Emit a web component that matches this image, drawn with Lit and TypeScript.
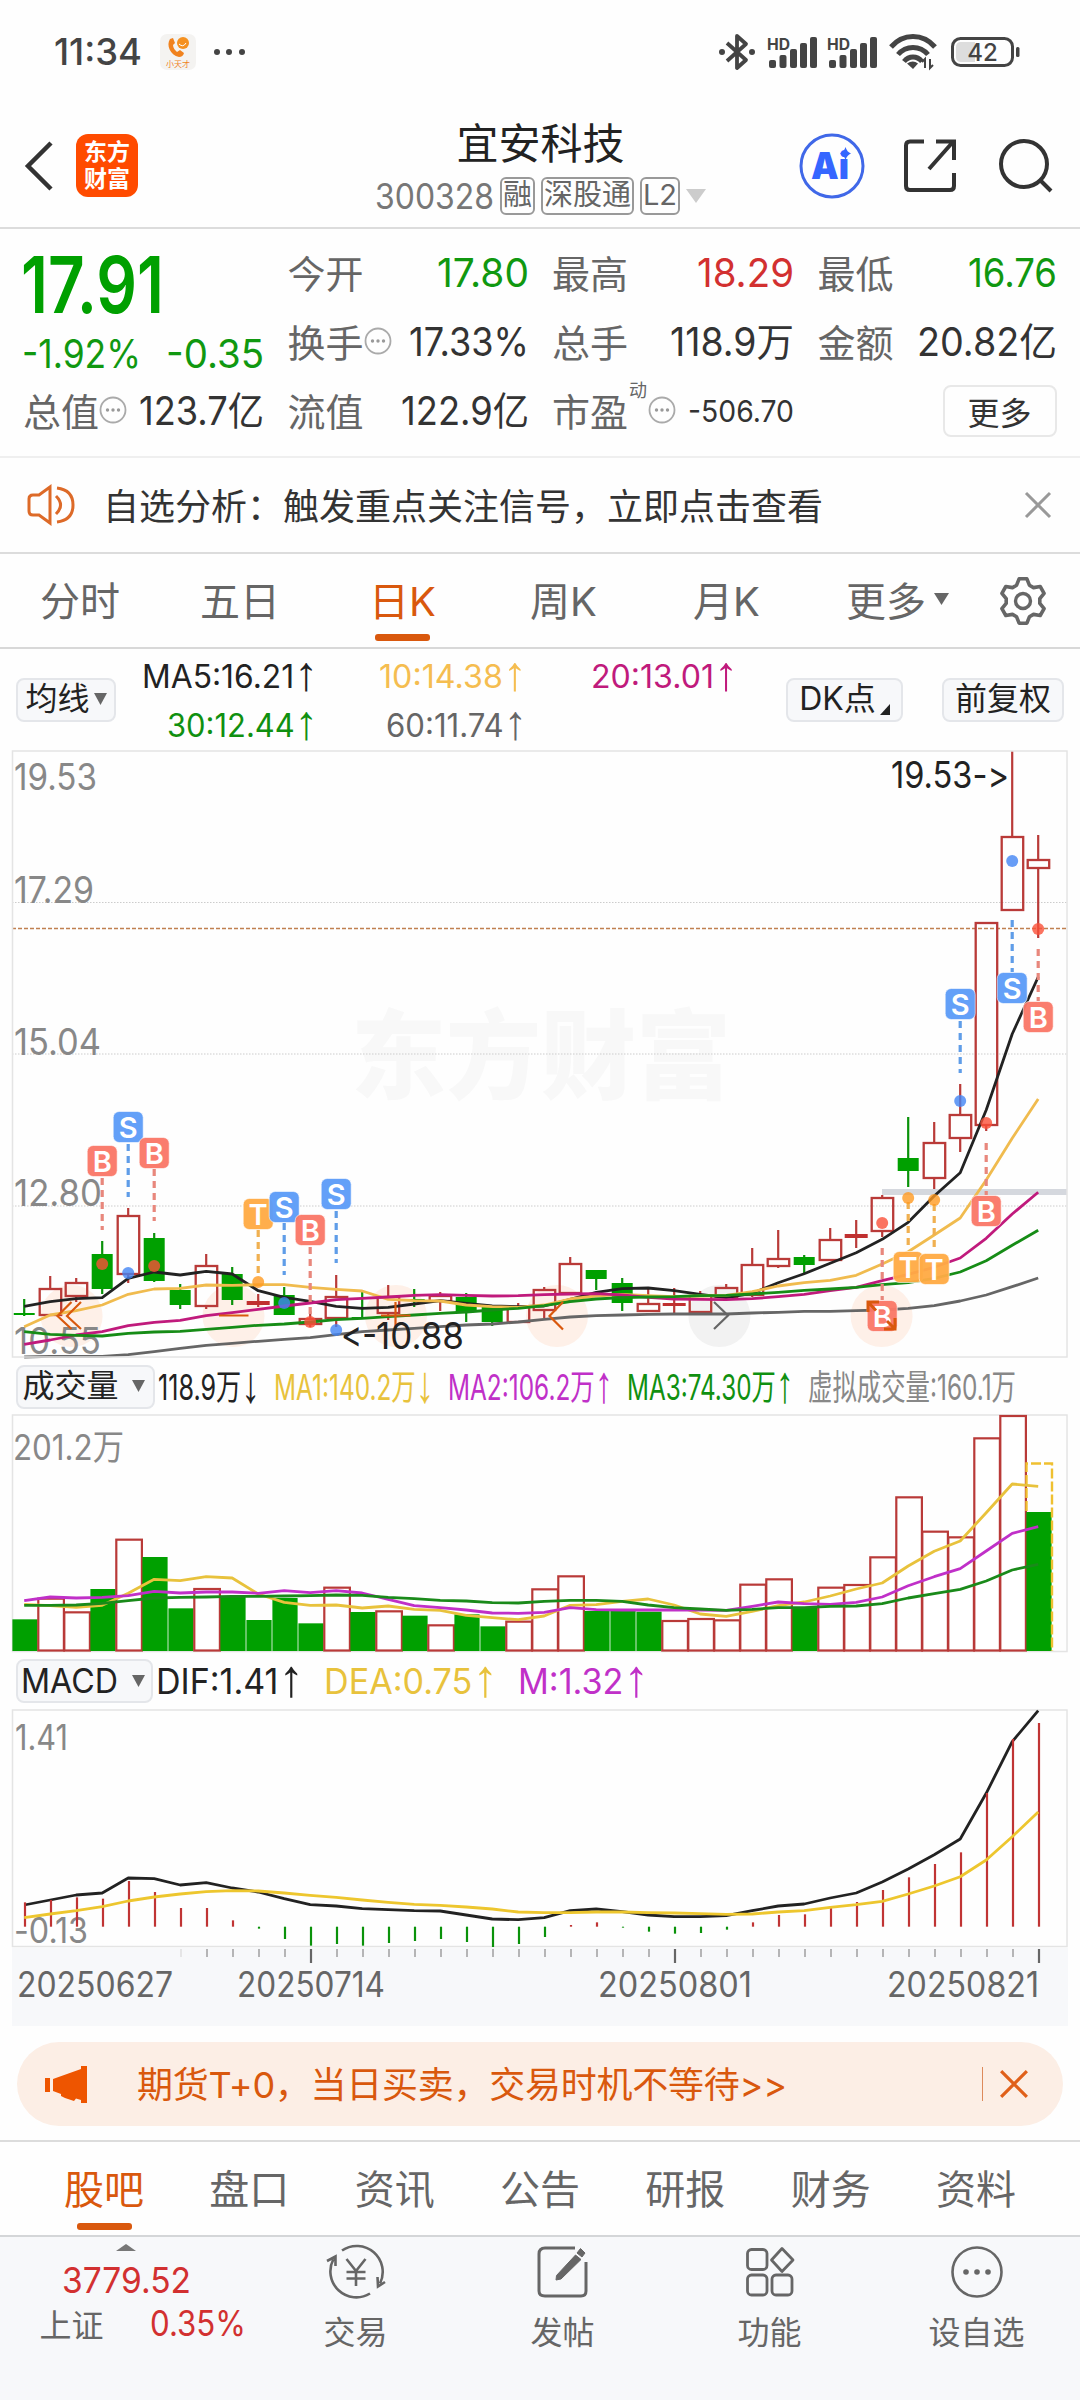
import { LitElement, html, svg, css, nothing } from "lit";
import { customElement } from "lit/decorators.js";

const FONT = `Inter, "Noto Sans CJK SC", sans-serif`;
const ORANGE = "#d9580d";
const GREEN = "#00a000";
const RED = "#b93a38";

/** Arrows use a narrow, tall glyph instead of the wide one of the text face. */
const withArrow = (s: string, size: number) => {
  const last = s.slice(-1);
  return last === "↑" || last === "↓"
    ? svg`${s.slice(0, -1)}<tspan font-family="Liberation Sans, sans-serif" font-size=${size * 1.5} dy=${size * 0.06}>${last}</tspan>`
    : svg`${s}`;
};

/** Text set to an exact advance width, flowing like an inline block; `tall` narrows the face. */
const fit = (s: string, w: number, size: number, color: string, weight = 400, tall = 1) => {
  const h = Math.round(size * 1.2);
  const base = (h / 2 + size * 0.3635) / tall;
  return html`<svg class="fit" width=${w} height=${h} viewBox="0 0 ${w} ${h}">
    <text x="0" y=${base} font-family=${FONT} font-size=${size / tall} font-weight=${weight} transform="scale(1 ${tall})"
      fill=${color} textLength=${w} lengthAdjust="spacingAndGlyphs">${withArrow(s, size / tall)}</text></svg>`;
};

/** Text placed at a point of a chart, set to an exact width. */
const label = (s: string, x: number, y: number, w: number, size: number, color: string, weight = 400) =>
  svg`<text x=${x} y=${y} font-family=${FONT} font-size=${size} font-weight=${weight} fill=${color}
    textLength=${w} lengthAdjust="spacingAndGlyphs">${s}</text>`;

const cx = (i: number) => 24.2 + 26 * i;
const line = (ys: number[], base: number, color: string, width = 2.8) =>
  svg`<polyline fill="none" stroke=${color} stroke-width=${width} stroke-linejoin="round"
    points=${ys.map((y, i) => `${cx(i)},${(base + y / 3).toFixed(1)}`).join(" ")}/>`;

const shared = css`
  :host { display: block; }
  svg { display: block; flex: none; overflow: visible; }
  text { font-variant-ligatures: none; font-feature-settings: "calt" 0, "liga" 0; }
`;

// kind, body top, body bottom, wick top, wick bottom
type Candle = [string, number, number, number, number];
const CANDLES: Candle[] = [
  ["g", 1313, 1315, 1299, 1316], ["r", 1289, 1315, 1276, 1315], ["r", 1283, 1296, 1278, 1302],
  ["g", 1254, 1289, 1241, 1294], ["r", 1216, 1274, 1208, 1283], ["g", 1238, 1281, 1233, 1282],
  ["g", 1290, 1305, 1284, 1309], ["r", 1266, 1306, 1254, 1309], ["g", 1274, 1300, 1267, 1305],
  ["s", 1301, 1305, 1294, 1307], ["g", 1295, 1315, 1287, 1315], ["r", 1319, 1324, 1311, 1327],
  ["r", 1297, 1318, 1275, 1327], ["g", 1317, 1319, 1292, 1318], ["r", 1297, 1313, 1285, 1320],
  ["g", 1299, 1301, 1289, 1307], ["r", 1296, 1301, 1292, 1311], ["g", 1297, 1312, 1293, 1322],
  ["g", 1307, 1322, 1305, 1326], ["r", 1307, 1322, 1303, 1322], ["r", 1290, 1310, 1287, 1318],
  ["r", 1264, 1293, 1257, 1294], ["g", 1270, 1279, 1270, 1290], ["g", 1283, 1303, 1278, 1311],
  ["r", 1304, 1311, 1289, 1311], ["s", 1303, 1306, 1288, 1313], ["r", 1296, 1312, 1291, 1312],
  ["r", 1288, 1297, 1284, 1300], ["r", 1265, 1295, 1248, 1297], ["r", 1259, 1266, 1230, 1268],
  ["g", 1257, 1265, 1255, 1273], ["r", 1240, 1260, 1228, 1260], ["s", 1234, 1238, 1220, 1248],
  ["r", 1198, 1231, 1195, 1237], ["g", 1158, 1171, 1117, 1187], ["r", 1143, 1178, 1122, 1189],
  ["r", 1115, 1138, 1084, 1152], ["r", 923, 1125, 923, 1131], ["r", 837, 910, 751, 910],
  ["r", 860, 868, 835, 938],
];
const MA5 = [739,725,716,713,655,636,645,634,642,692,712,724,739,745,742,732,722,730,738,740,738,718,697,686,684,692,703,713,700,668,641,610,578,538,487,408,338,150,-78,-249];
const MA10 = [800,765,752,735,703,687,685,675,676,674,674,682,688,693,718,722,723,735,740,742,735,717,708,703,707,710,708,706,695,678,668,661,646,612,575,525,474,360,235,117];
const MA20 = [853,840,825,815,797,787,781,767,758,748,738,729,719,715,711,706,704,706,708,707,704,702,701,705,712,717,718,719,716,710,703,692,682,662,643,622,594,535,462,397];
const MA30 = [815,823,826,828,820,816,814,808,802,796,792,786,779,775,770,765,760,756,750,745,737,725,717,713,711,710,707,706,702,697,691,687,682,674,668,655,636,602,556,511];
const MA60 = [891,889,889,889,884,875,865,856,850,844,838,833,824,815,810,805,800,795,792,786,778,771,767,765,763,762,762,762,759,757,754,754,752,750,745,737,723,705,680,654];

// kind, candle index, badge centre, dot centre, leader start, leader end
type Mark = ["B" | "S" | "T", number, number, number, number, number];
const MARKS: Mark[] = [
  ["B", 3, 1161, 1264, 1178, 1230], ["S", 4, 1127, 1273, 1144, 1197], ["B", 5, 1153, 1266, 1169, 1221],
  ["T", 9, 1214, 1282, 1230, 1277], ["S", 10, 1207, 1303, 1223, 1275], ["B", 11, 1230, 1322, 1247, 1318],
  ["S", 12, 1194, 1330, 1211, 1263], ["B", 33, 1316, 1223, 1248, 1300], ["T", 34, 1267, 1198, 1202, 1250],
  ["T", 35, 1269, 1200, 1204, 1252], ["S", 36, 1004, 1101, 1021, 1073], ["B", 37, 1211, 1123, 1143, 1195],
  ["S", 38, 988, 861, 920, 972], ["B", 39, 1017, 929, 949, 1001],
];
const MARK_FILL = { B: "#fa7868", S: "#5d9cf8", T: "#ffab45" };
const MARK_DOT = { B: "#fa5038", S: "#4285f4", T: "#ff9a20" };
const MARK_LINE = { B: "#e8877c", S: "#5f9de8", T: "#f0b050" };

@customElement("kline-chart")
class KlineChart extends LitElement {
  static styles = shared;

  private candle([k, t, b, wt, wb]: Candle, i: number) {
    const x = cx(i);
    const color = k === "g" ? "#0a920a" : RED;
    const wicks = svg`<path d="M${x} ${wt}V${t}M${x} ${b}V${wb}" stroke=${color} stroke-width="2.2"/>`;
    return k === "r"
      ? svg`${wicks}<rect x=${x - 10.5} y=${t} width="21.500" height=${b - t} fill="none" stroke=${color} stroke-width="2.300"/>`
      : svg`${wicks}<rect x=${x - (k === "s" ? 11.5 : 10.5)} y=${t} width=${k === "s" ? 23 : 21} height=${b - t}
          fill=${k === "g" ? GREEN : "#c03030"}/>`;
  }

  private mark([k, i, by, dy, y1, y2]: Mark) {
    const x = cx(i);
    return svg`
      <path d="M${x} ${y1}V${y2}" stroke=${MARK_LINE[k]} stroke-width="3.2" stroke-dasharray="7 5"/>
      <circle cx=${x} cy=${dy} r="6" fill=${MARK_DOT[k]} fill-opacity=".8"/>
      <rect x=${x - 15} y=${by - 15.5} width="30" height="31" rx="6" fill=${MARK_FILL[k]} fill-opacity=".96"
        stroke="#fff" stroke-opacity=".6"/>
      <text x=${x} y=${by + 10.5} text-anchor="middle" font-family=${FONT} font-size="29" font-weight="600" fill="#fff">${k}</text>`;
  }

  render() {
    const halo = (x: number, c = "#fef0e8") => svg`<circle cx=${x} cy="1316" r="31" fill=${c}/>`;
    return html`<svg width="1080" height="608" viewBox="0 750 1080 608">
      ${label("东方财富", 351, 1091, 380, 97, "#f8f8f8", 900)}
      ${[902.5, 1054, 1206].map((y) => svg`<path d="M12 ${y}H1067" stroke="#ccc" stroke-dasharray="1.5 1.5"/>`)}
      ${label("19.53", 14, 790, 83, 37, "#888")}
      ${label("17.29", 14, 903, 80, 37, "#888")}
      ${label("15.04", 14, 1055, 87, 37, "#888")}
      ${label("12.80", 14, 1206, 88, 37, "#888")}
      ${halo(71.6)}${halo(233.5)}${halo(396)}${halo(557)}${halo(719.4, "#f2f2f2")}${halo(881.6)}
      ${label("10.55", 14, 1354, 87, 37, "#888")}
      <rect x="882" y="1189" width="185" height="6" fill="#d5d8de"/>
      <path d="M12 928.5H1067" stroke="#c08050" stroke-width="1.3" stroke-dasharray="4 2"/>
      ${CANDLES.map((c, i) => this.candle(c, i))}
      ${line(MA5, 1060, "#222")}${line(MA10, 1060, "#f0bb4e")}${line(MA20, 1060, "#c01a7c")}
      ${line(MA30, 1060, "#168c16")}${line(MA60, 1060, "#666")}
      <rect x="12.5" y="751" width="1054.5" height="606" fill="none" stroke="#e4e4e4" stroke-width="1.5"/>
      ${MARKS.map((m) => this.mark(m))}
      <g fill="none" stroke=${ORANGE} stroke-width="2.2">
        <path d="M71.500 1302 57.500 1316 71.500 1329M81 1302 67 1316 81 1329"/>
        <path d="M219 1315.500H248.500M381 1315.500H410.500M395.500 1302V1330"/>
        <path d="M563 1302 549.500 1316 563 1329.500"/>
        <path d="M868 1302 876 1310.500M887 1321 895 1329M868 1312V1302H879M895 1318V1329H884" stroke-width="3"/>
      </g>
      <path d="M714 1302 728 1315.500 714 1329" fill="none" stroke="#666" stroke-width="2.200"/>
      ${label("19.53->", 891, 788, 118, 37, "#222")}
      ${label("<-", 341, 1347, 36, 37, "#222")}
      ${label("10.88", 376, 1349, 88, 37, "#222")}
    </svg>`;
  }
}

const VOLUME: [string, number][] = [
  ["g",808],["r",746],["r",787],["g",717],["r",569],["g",621],["g",775],["r",717],["g",738],["g",810],
  ["g",744],["g",820],["r",713],["g",786],["r",784],["g",797],["r",826],["g",793],["g",829],["r",815],
  ["r",718],["r",679],["g",783],["g",783],["g",785],["r",813],["r",807],["r",811],["r",704],["r",688],
  ["g",771],["r",713],["r",705],["r",622],["r",442],["r",545],["r",562],["r",265],["r",198],["g",486],
];
const VMA1 = [763,767,772,766,730,688,692,680,684,732,757,766,765,774,768,778,781,796,803,809,798,766,764,754,747,765,792,799,784,767,756,738,717,699,648,604,573,488,402,409];
const VMA2 = [752,741,744,742,737,724,729,726,726,730,722,728,722,729,748,767,773,780,789,790,787,773,779,780,780,780,780,781,769,756,761,763,757,741,707,680,656,603,550,530];
const VMA3 = [766,766,765,760,752,744,742,741,739,739,738,737,735,736,742,746,751,753,758,759,754,751,751,754,765,773,777,781,778,773,773,769,768,761,744,731,718,693,660,643];

@customElement("volume-chart")
class VolumeChart extends LitElement {
  static styles = shared;
  render() {
    return html`<svg width="1080" height="238" viewBox="0 1414 1080 238">
      <rect x="12.5" y="1415" width="1054.500" height="236.500" fill="none" stroke="#e4e4e4" stroke-width="1.500"/>
      ${label("201.2万", 13, 1460, 111, 35, "#888")}
      ${VOLUME.map(([k, t], i) => {
        const x = cx(i) - 12.4;
        const y = 1350 + t / 3;
        return k === "g"
          ? svg`<rect x=${x + 0.6} y=${y} width="25.200" height=${1651 - y} fill=${GREEN}/>`
          : svg`<rect x=${x + 0.5} y=${y} width="25.600" height=${1650.5 - y} fill="#fff" stroke=${RED} stroke-width="2.200"/>`;
      })}
      <path d="M1026.500 1511V1463.500H1052V1651" fill="none" stroke="#efc030" stroke-width="2.400" stroke-dasharray="10 3"/>
      ${line(VMA1, 1350, "#e8c23c")}${line(VMA2, 1350, "#c030c8")}${line(VMA3, 1350, "#1a8a1a")}
    </svg>`;
  }
}

const HIST = [727,720,712,716,663,696,744,744,781,806,837,857,852,857,849,843,837,846,861,852,831,795,787,803,815,821,819,809,787,765,763,742,726,690,652,612,577,399,237,189];
const DIF = [735,720,705,699,654,656,675,668,684,696,716,734,738,746,749,752,753,765,777,779,773,752,747,755,765,770,770,767,752,738,732,714,699,666,627,584,537,400,245,152];
const DEA = [773,762,752,740,723,711,702,695,692,693,699,706,712,720,727,733,736,741,747,756,758,758,756,756,758,759,761,763,762,756,752,742,734,724,702,678,650,600,530,456];

@customElement("macd-chart")
class MacdChart extends LitElement {
  static styles = shared;
  render() {
    return html`<svg width="1080" height="317" viewBox="0 1709 1080 317">
      <rect x="12" y="1948" width="1056" height="78" fill="#f7f8fa"/>
      <rect x="12.5" y="1710" width="1054.500" height="236.500" fill="none" stroke="#e4e4e4" stroke-width="1.500"/>
      ${label("1.41", 15, 1750, 53, 35, "#888")}
      ${label("-0.13", 14, 1943, 74, 35, "#888")}
      ${line(DIF, 1660, "#222")}
      ${HIST.map((h, i) => svg`<path d="M${cx(i) + 0.8} 1926.700V${1660 + h / 3}" stroke=${h > 800 ? "#0a920a" : "#c03434"} stroke-width="2.200"/>`)}
      ${line(DEA, 1660, "#edc62e")}
      ${HIST.map((_, i) =>
        i < 6 ? nothing : svg`<path d="M${cx(i) + 0.8} 1949V${(i - 11) % 14 ? 1957 : 1963}"
          stroke=${i === 6 ? "#ddd" : (i - 11) % 14 ? "#999" : "#666"} stroke-width=${(i - 11) % 14 ? 1.4 : 2.2}/>`)}
      ${label("20250627", 17, 1997, 156, 35, "#666")}
      ${label("20250714", 237, 1997, 148, 35, "#666")}
      ${label("20250801", 598, 1997, 154, 35, "#666")}
      ${label("20250821", 887, 1997, 152, 35, "#666")}
    </svg>`;
  }
}

const GEAR = (() => {
  const p: string[] = [];
  for (let i = 0; i < 6; i++) {
    for (const [r, a] of [[17, -22], [22.5, -10], [22.5, 10], [17, 22]]) {
      const t = ((i * 60 + a - 90) * Math.PI) / 180;
      p.push(`${(24 + r * Math.cos(t)).toFixed(1)} ${(24 + r * Math.sin(t)).toFixed(1)}`);
    }
  }
  return `M${p.join("L")}Z`;
})();

const info = html`<svg class="info" width="28" height="28" viewBox="0 0 28 28">
  <circle cx="14" cy="14" r="12.500" fill="none" stroke="#aaa" stroke-width="1.800"/>
  <g fill="#999"><circle cx="8.500" cy="14" r="1.700"/><circle cx="14" cy="14" r="1.700"/><circle cx="19.500" cy="14" r="1.700"/></g></svg>`;

const tri = (w: number, h: number, c: string) =>
  html`<svg width=${w} height=${h} viewBox="0 0 ${w} ${h}"><path d="M0 0H${w}L${w / 2} ${h}Z" fill=${c}/></svg>`;

const signal = html`<svg width="50" height="36" viewBox="0 0 50 36">
  <text x="-2" y="15.500" font-family=${FONT} font-size="16" font-weight="700" fill="#444" textLength="23" lengthAdjust="spacingAndGlyphs">HD</text>
  <g fill="#444"><rect x="0" y="26" width="7" height="8" rx="2"/><rect x="10.500" y="21" width="7" height="13" rx="2"/>
  <rect x="21" y="15" width="7" height="19" rx="2"/><rect x="31" y="9" width="7" height="25" rx="2"/><rect x="41" y="3" width="7" height="31" rx="2"/></g></svg>`;

@customElement("app-root")
class AppRoot extends LitElement {
  static styles = css`
    :host {
      display: block; width: 1080px; height: 2400px; overflow: hidden; background: #fefefe;
      font-family: Inter, "Noto Sans CJK SC", sans-serif; color: #333;
    }
    * { box-sizing: border-box; }
    svg { display: block; flex: none; overflow: visible; }
    .row { display: flex; align-items: center; white-space: nowrap; }
    .status { height: 104px; padding: 0 59px 0 54px; }
    .app { margin-left: 18px; }
    .more-dots { margin-left: 16px; }
    .spacer { flex: 1; }
    .bt { margin-right: 14px; }
    .sig { margin-right: 10px; }
    .wifi { margin-right: 14px; }
    .header { height: 125px; padding: 0 27px 0 25px; border-bottom: 2px solid #dcdcdc; }
    .logo { margin-left: 23px; width: 62px; height: 63px; border-radius: 12px; background: #ff4b00; color: #fff;
      display: grid; place-content: center; font-size: 23px; font-weight: 700; line-height: 27px; text-align: center; }
    .titles { flex: 1; display: flex; flex-direction: column; align-items: center; margin: 7px 0 0 144px; }
    .name { font-size: 42px; line-height: 50px; color: #222; }
    .code { display: flex; align-items: center; height: 46px; gap: 6px; margin-top: 4px; color: #777; }
    .tag { height: 38px; border: 2px solid #999; border-radius: 6px; font-size: 29px; line-height: 32px; padding: 0 1px; color: #666; }
    .ai { margin-right: 39px; }
    .share { margin-right: 43px; }
    .quote { height: 229px; padding: 9px 23px 0 24px; border-bottom: 2px solid #efefef; display: grid;
      grid-template-columns: 240px 240px 241px 238px; column-gap: 24.500px; }
    .cell { height: 69px; display: flex; align-items: center; justify-content: space-between; white-space: nowrap;
      font-size: 38px; color: #666; }
    .cell .lab { display: flex; align-items: center; padding-bottom: 2px; margin-left: -1px; }
    .sup { font-size: 18px; align-self: flex-start; margin: 0 1px; line-height: 18px; }
    .price { height: 92px; display: flex; align-items: center; margin-left: -3px; }
    .change { height: 46px; display: flex; align-items: center; justify-content: space-between; margin-left: -2px; }
    .btn-more { width: 114px; height: 52px; border: 2px solid #e8e8e8; border-radius: 8px; font-size: 32px; color: #333;
      display: grid; place-content: center; margin-left: auto; }
    .notice { height: 96px; padding: 0 28px; border-bottom: 2px solid #dcdcdc; font-size: 36px; color: #333; }
    .notice span { margin: -3px 0 0 28px; }
    .tabs { height: 95px; padding: 0 0 0 40px; border-bottom: 2px solid #d8d8d8; font-size: 40px; color: #666;
      display: grid; grid-template-columns: 160px 169px 161px 163px 153px 153px auto; justify-items: start; }
    .tab { position: relative; display: flex; align-items: center; gap: 8px; padding-bottom: 3px; }
    .tab.gear { padding-bottom: 0; }
    .tab.on { color: #d9580d; }
    .tab.on::after { content: ""; position: absolute; left: 50%; bottom: 6px; width: 55px; height: 7px; margin-left: -27.500px;
      border-radius: 3px; background: #d9580d; }
    .ma { height: 101px; padding: 0 16px; }
    .pill { height: 44px; border: 2px solid #e4e6ea; border-radius: 8px; background: #f7f8fa; color: #222; font-size: 32px;
      display: flex; align-items: center; justify-content: center; gap: 4px; line-height: 36px; padding-bottom: 1px; }
    .w-ma { width: 100px; } .w-dk { width: 117px; } .w-fq { width: 122px; margin-left: 39px; }
    .w-vol { width: 139px; gap: 13px; padding-right: 4px; } .w-macd { width: 137px; gap: 14px; padding-right: 4px; }
    .ma-grid { display: grid; grid-template-columns: 202px 209px 211px; grid-template-rows: 49px 49px; justify-items: end;
      align-items: center; flex: 1; padding-top: 1px; }
    .corner { align-self: flex-end; margin-bottom: 4px; }
    .legend { padding: 0 16px; gap: 14px; }
    .legend.vol { height: 56px; padding-top: 1px; }
    .legend.macd { height: 57px; padding-top: 1px; gap: 20px; }
    .legend .first { margin-left: -11px; }
    .legend.macd .first { margin-left: -17px; }
    .promo { margin: 16px 17px 14px; height: 84px; border-radius: 42px; background: #fceee5; padding: 0 34px 0 28px;
      color: #d9580d; font-size: 36px; }
    .promo .txt { margin: -4px 0 0 50px; letter-spacing: -0.25px; }
    .rule { width: 1.500px; height: 34px; background: #dd8a5c; margin-right: 16px; }
    .sections { height: 97px; border-top: 2px solid #dcdcdc; border-bottom: 2px solid #d4d6d8; padding: 0 64px; font-size: 40px;
      color: #666; display: flex; justify-content: space-between; }
    .sections .tab.on::after { bottom: 5px; }
    .bottom { height: 163px; background: #f7f8fa; display: grid; grid-template-columns: 252px repeat(4, 207px); font-size: 32px; color: #666; }
    .nav { display: flex; flex-direction: column; align-items: center; padding-top: 5px; gap: 7px; line-height: 48px; }
    .index { display: flex; flex-direction: column; align-items: center; padding-top: 7px; }
    .index .up { margin-bottom: 7px; }
    .index .line { display: flex; align-items: center; gap: 46px; margin: -1px 0 0 33px; }
  `;

  private status() {
    return html`<div class="row status">
      ${fit("11:34", 88, 37, "#444", 500)}
      <svg class="app" width="36" height="36" viewBox="0 0 36 36"><rect width="36" height="36" rx="7" fill="#f4f3f1"/>
        <path d="M10 5c-4 6 0 16 9 18q4 0 5-4l-4-3-3 2c-2-2-4-4-4-7l2-2-2-5z" fill="#f0821e"/>
        <circle cx="23" cy="9" r="6" fill="#f59120"/><path d="M19 10q4 4 7-1" stroke="#fff" fill="none"/>
        <text x="6" y="33" font-size="8" font-family=${FONT} fill="#f0821e">小天才</text></svg>
      <svg class="more-dots" width="34" height="8" viewBox="0 0 34 8"><g fill="#444"><circle cx="5" cy="4" r="3"/><circle cx="17" cy="4" r="3"/><circle cx="30" cy="4" r="3"/></g></svg>
      <span class="spacer"></span>
      <svg class="bt" width="36" height="38" viewBox="0 0 36 38"><path d="M8 10 27 27 18 35V3L27 11 8 28" fill="none" stroke="#444" stroke-width="3.800" stroke-linejoin="round"/>
        <circle cx="3" cy="19" r="3" fill="#444"/><circle cx="33" cy="19" r="3" fill="#444"/></svg>
      <span class="sig">${signal}</span><span class="sig">${signal}</span>
      <svg class="wifi" width="48" height="36" viewBox="0 0 48 36"><g fill="none" stroke="#444" stroke-width="5">
        <path d="M2 13C14-1 34-1 46 13"/><path d="M9 20.500C17 11 31 11 39 20.500"/><path d="M15 27.500c5-6 13-6 18 0"/></g>
        <path d="M18 29.500q6-4 11 0L24 35Z" fill="#444"/><path d="M36 34V25l-3 3M41 25v9l3-3" fill="none" stroke="#444" stroke-width="2"/></svg>
      <svg width="70" height="32" viewBox="0 0 70 32"><rect x="1.500" y="2.500" width="60" height="27" rx="8" fill="none" stroke="#444" stroke-width="3"/>
        <path d="M10 6h14v20H10q-5 0-5-5V11q0-5 5-5z" fill="#ddd"/><rect x="65" y="11" width="3.500" height="10" rx="1.500" fill="#444"/>
        <text x="31.500" y="25" text-anchor="middle" font-family=${FONT} font-size="24" font-weight="500" fill="#444">42</text></svg>
    </div>`;
  }

  private header() {
    return html`<div class="row header">
      <svg width="28" height="50" viewBox="0 0 28 50"><path d="M26 2 3 25 26 48" fill="none" stroke="#333" stroke-width="4.500"/></svg>
      <div class="logo"><span>东方</span><span>财富</span></div>
      <div class="titles"><div class="name">宜安科技</div>
        <div class="code">${fit("300328", 119, 35, "#777")}<span class="tag">融</span><span class="tag">深股通</span><span class="tag">L2</span>${tri(20, 14, "#ccc")}</div></div>
      <svg class="ai" width="66" height="66" viewBox="0 0 66 66"><circle cx="33" cy="33" r="31" fill="none" stroke="#4068e8" stroke-width="3"/>
        <text x="12" y="46" font-family=${FONT} font-size="37" font-weight="900" fill="#3566ff" textLength="38" lengthAdjust="spacingAndGlyphs">Ai</text>
        <path d="M46.500 14q1.500 5 5.500 6.500-4 1.500-5.500 6.500-1.500-5-5.500-6.500 4-1.500 5.500-6.500z" fill="#3566ff"/></svg>
      <svg class="share" width="52" height="53" viewBox="0 0 52 53"><path d="M20 2.500H6q-4 0-4 4V47q0 4 4 4H46q4 0 4-4V34M25 30 48 4M32 2.500H50V21" fill="none" stroke="#333" stroke-width="4"/></svg>
      <svg width="54" height="54" viewBox="0 0 54 54"><circle cx="25" cy="25" r="23" fill="none" stroke="#333" stroke-width="4"/><path d="M42 42 52 52" stroke="#333" stroke-width="4"/></svg>
    </div>`;
  }

  private cell(lab: unknown, value: unknown) {
    return html`<div class="cell"><span class="lab">${lab}</span>${value}</div>`;
  }

  private quote() {
    return html`<div class="quote">
      <div><div class="price">${fit("17.91", 143, 79, GREEN, 600)}</div>
        <div class="change">${fit("-1.92%", 119, 39, "#109810")}${fit("-0.35", 98, 39, "#109810")}</div>
        <div class="cell total"><span class="lab">总值${info}</span>${fit("123.7亿", 125, 39, "#333")}</div></div>
      <div>${this.cell("今开", fit("17.80", 92, 39, "#109810"))}
        ${this.cell(html`换手${info}`, fit("17.33%", 120, 39, "#333"))}
        ${this.cell("流值", fit("122.9亿", 128, 39, "#333"))}</div>
      <div>${this.cell("最高", fit("18.29", 97, 39, "#d23030"))}
        ${this.cell("总手", fit("118.9万", 124, 39, "#333"))}
        ${this.cell(html`市盈<span class="sup">动</span>${info}`, fit("-506.70", 106, 30, "#333"))}</div>
      <div>${this.cell("最低", fit("16.76", 89, 39, "#109810"))}
        ${this.cell("金额", fit("20.82亿", 140, 39, "#333"))}
        <div class="cell"><div class="btn-more">更多</div></div></div>
    </div>`;
  }

  private close(size: number, color: string) {
    return html`<svg width=${size} height=${size} viewBox="0 0 28 28"><path d="M2 2 26 26M26 2 2 26" stroke=${color} stroke-width="3"/></svg>`;
  }

  render() {
    return html`
      ${this.status()}${this.header()}${this.quote()}
      <div class="row notice">
        <svg width="47" height="42" viewBox="0 0 47 42"><g fill="none" stroke="#dd6a28" stroke-width="3">
          <path d="M22 3 11 11H5q-4 0-4 4V27q0 4 4 4h6L22 39Z"/><path d="M28 12q9 9 0 18M29 4Q45 6 45 21T29 38"/></g></svg>
        <span>自选分析：触发重点关注信号，立即点击查看</span><i class="spacer"></i>${this.close(28, "#999")}
      </div>
      <div class="tabs">
        <div class="tab">分时</div><div class="tab">五日</div><div class="tab on">日K</div><div class="tab">周K</div><div class="tab">月K</div>
        <div class="tab">更多${tri(15, 12, "#666")}</div>
        <div class="tab gear"><svg width="48" height="48" viewBox="0 0 48 48"><path d=${GEAR} fill="none" stroke="#666" stroke-width="3.600" stroke-linejoin="round"/>
          <circle cx="24" cy="24" r="7.500" fill="none" stroke="#666" stroke-width="3.400"/></svg></div>
      </div>
      <div class="row ma">
        <div class="pill w-ma">均线${tri(13, 12, "#666")}</div>
        <div class="ma-grid">
          ${fit("MA5:16.21↑", 176, 32, "#222")}${fit("10:14.38↑", 148, 32, "#f5bd50")}${fit("20:13.01↑", 147, 32, "#c01a7c")}
          ${fit("30:12.44↑", 151, 32, "#109010")}${fit("60:11.74↑", 141, 32, "#666")}
        </div>
        <div class="pill w-dk">DK点<svg class="corner" width="10" height="11" viewBox="0 0 10 11"><path d="M10 0V11H0Z" fill="#222"/></svg></div>
        <div class="pill w-fq">前复权</div>
      </div>
      <kline-chart></kline-chart>
      <div class="row legend vol">
        <div class="pill w-vol">成交量${tri(13, 12, "#666")}</div>
        <span class="first">${fit("118.9万↓", 102, 35, "#222", 400, 1.38)}</span>${fit("MA1:140.2万↓", 160, 35, "#e8c23c", 400, 1.46)}
        ${fit("MA2:106.2万↑", 165, 35, "#c030c8", 400, 1.44)}${fit("MA3:74.30万↑", 167, 35, "#109010", 400, 1.44)}${fit("虚拟成交量:160.1万", 208, 35, "#888", 400, 1.46)}
      </div>
      <volume-chart></volume-chart>
      <div class="row legend macd">
        <div class="pill w-macd">${fit("MACD", 97, 34, "#222")}${tri(13, 12, "#666")}</div>
        <span class="first">${fit("DIF:1.41↑", 148, 35, "#222")}</span>${fit("DEA:0.75↑", 174, 35, "#e8c23c")}${fit("M:1.32↑", 131, 35, "#c030c8")}
      </div>
      <macd-chart></macd-chart>
      <div class="row promo">
        <svg width="42" height="37" viewBox="0 0 42 37"><g fill="#ee5500"><rect y="12" width="5" height="14"/><path d="M8 13 36 3V0h6V37H36V34L31 32.500 29 35 23 33 20 32 16 30V28L8 25Z"/></g></svg>
        <span class="txt">期货T+0，当日买卖，交易时机不等待&gt;&gt;</span><i class="spacer"></i><span class="rule"></span>${this.close(30, "#e0601a")}
      </div>
      <div class="sections">
        ${["股吧", "盘口", "资讯", "公告", "研报", "财务", "资料"].map((t, i) => html`<div class="tab ${i ? "" : "on"}">${t}</div>`)}
      </div>
      <div class="bottom">
        <div class="index"><svg class="up" width="20" height="7" viewBox="0 0 20 7"><path d="M10 0 20 7H0Z" fill="#777"/></svg>
          ${fit("3779.52", 129, 36, "#d23030")}
          <div class="line">上证 ${fit("0.35%", 96, 35, "#d23030")}</div></div>
        <div class="nav"><svg width="60" height="60" viewBox="0 0 60 60"><g fill="none" stroke="#666" stroke-width="2.600">
          <path d="M16 8.500A26 26 0 0 1 54 41.500M44 51.500A26 26 0 0 1 7.500 17M1 19 9.500 14.500V24M59 40 52 44.500 51.500 35"/>
          <path d="M20.500 17 30 29 39.500 17M30 29V44M20.500 30H39.500M20.500 36.500H39.500"/></g></svg>交易</div>
        <div class="nav"><svg width="60" height="60" viewBox="0 0 60 60"><path d="M42 6H12q-6 0-6 6V49q0 5 6 5H48q5 0 5-5V20" fill="none" stroke="#666" stroke-width="3"/>
          <path d="M47.500 6.500 52 11 49 15 44 11ZM42.500 13 48 17.500 28 37 23 38 23.500 33.500Z" fill="#666" stroke="#666"/></svg>发帖</div>
        <div class="nav"><svg width="60" height="60" viewBox="0 0 60 60"><g fill="none" stroke="#666" stroke-width="2.800">
          <rect x="7.500" y="7.500" width="19.500" height="20" rx="4"/><rect x="7.500" y="33" width="19.500" height="20" rx="4"/><rect x="32" y="33" width="20" height="20" rx="4"/>
          <path d="M42 6.500 53 18 42 29.500 31.500 18Z" stroke-linejoin="round"/></g></svg>功能</div>
        <div class="nav"><svg width="60" height="60" viewBox="0 0 60 60"><circle cx="30" cy="30" r="24.500" fill="none" stroke="#666" stroke-width="2.600"/>
          <g fill="#666"><circle cx="19" cy="30" r="2.800"/><circle cx="30" cy="30" r="2.800"/><circle cx="41" cy="30" r="2.800"/></g></svg>设自选</div>
      </div>`;
  }
}
